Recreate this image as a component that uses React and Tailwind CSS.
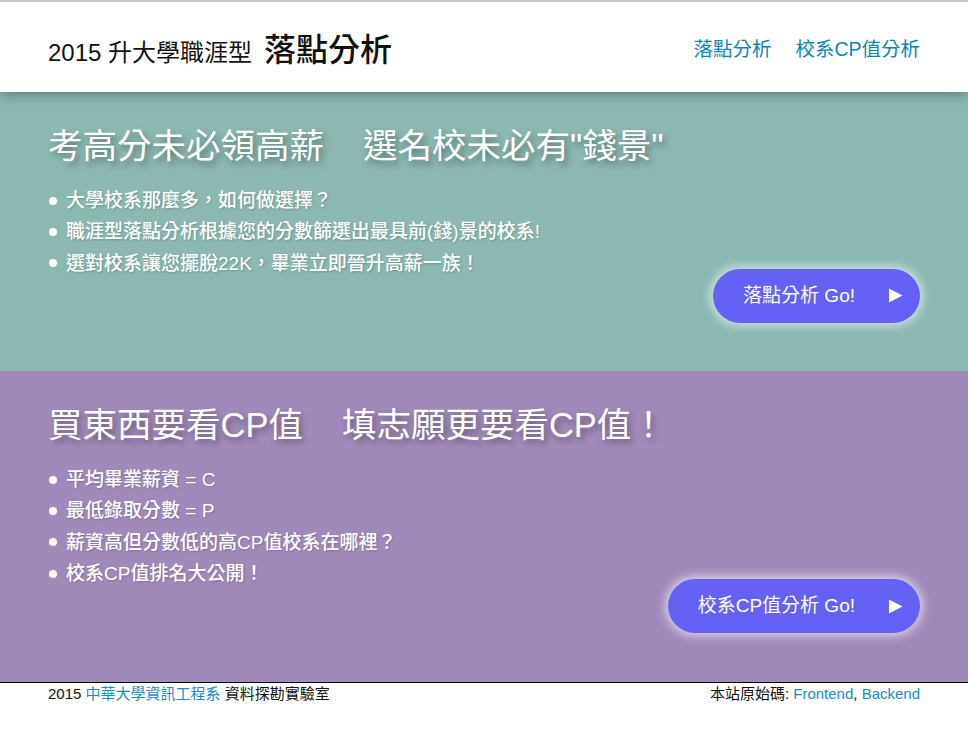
import React from 'react';

const font = { fontFamily: '"Liberation Sans", "Noto Sans CJK TC", sans-serif' };

function Play() {
  return (
    <svg width="15" height="15" viewBox="0 0 15 15" className="fill-white">
      <path d="M1 0.5 L14.5 7.5 L1 14.5 Z" />
    </svg>
  );
}

function Section({ bg, pb, title1, title2, items, button }) {
  return (
    <section className={`${bg} ${pb} px-12 pt-[32px]`}>
      <h2 className="text-[34.5px] leading-[44px] text-white [text-shadow:3px_4px_6px_rgba(0,0,0,0.35)]">
        {title1}
        <span className="inline-block w-[39px]" />
        {title2}
      </h2>

      <ul className="mt-[17px] text-[19px] leading-[31.33px] font-medium text-white [text-shadow:1px_1px_2px_rgba(0,0,0,0.2)]">
        {items.map((t) => (
          <li key={t} className="flex items-center">
            <span className="mr-[9px] ml-[1px] inline-block h-[8px] w-[8px] rounded-full bg-white" />
            {t}
          </li>
        ))}
      </ul>

      <div className="-mt-[10px] flex justify-end">
        <button className="flex h-[54px] items-center rounded-full bg-[#6461f4] pl-[30px] pr-[17px] text-[19px] text-white shadow-[0_0_10px_3px_rgba(255,255,255,0.6)]">
          <span>{button}</span>
          <span className="ml-[33px]"><Play /></span>
        </button>
      </div>
    </section>
  );
}

export default function App() {
  return (
    <div style={font} className="min-h-[735px] bg-white">
      {/* Header */}
      <header className="relative z-10 flex h-[92px] items-center justify-between border-t-2 border-[#c6c6c6] bg-white px-12 pt-[6px] shadow-[0_2px_12px_rgba(0,0,0,0.35)]">
        <h1 className="flex items-baseline text-[#111]">
          <span className="text-[24px]">2015 升大學職涯型</span>
          <span className="ml-[12px] text-[32px] font-medium">落點分析</span>
        </h1>
        <nav className="flex gap-[24px] text-[19.5px] text-[#0d84b5]">
          <a href="#">落點分析</a>
          <a href="#">校系CP值分析</a>
        </nav>
      </header>

      <Section
        bg="bg-[#8bb8b1]"
        pb="pb-[48px]"
        title1="考高分未必領高薪"
        title2={'選名校未必有"錢景"'}
        items={[
          '大學校系那麼多，如何做選擇？',
          '職涯型落點分析根據您的分數篩選出最具前(錢)景的校系!',
          '選對校系讓您擺脫22K，畢業立即晉升高薪一族！',
        ]}
        button="落點分析 Go!"
      />

      <Section
        bg="bg-[#a08aba]"
        pb="pb-[49px]"
        title1="買東西要看CP值"
        title2="填志願更要看CP值！"
        items={[
          '平均畢業薪資 = C',
          '最低錄取分數 = P',
          '薪資高但分數低的高CP值校系在哪裡？',
          '校系CP值排名大公開！',
        ]}
        button="校系CP值分析 Go!"
      />

      {/* Footer */}
      <footer className="flex justify-between border-t border-black px-12 text-[15px] leading-[22px] text-[#111]">
        <p>
          2015 <a href="#" className="text-[#1a8dbd]">中華大學資訊工程系</a> 資料探勘實驗室
        </p>
        <p>
          本站原始碼: <a href="#" className="text-[#1a8dbd]">Frontend</a>,{' '}
          <a href="#" className="text-[#1a8dbd]">Backend</a>
        </p>
      </footer>
    </div>
  );
}
